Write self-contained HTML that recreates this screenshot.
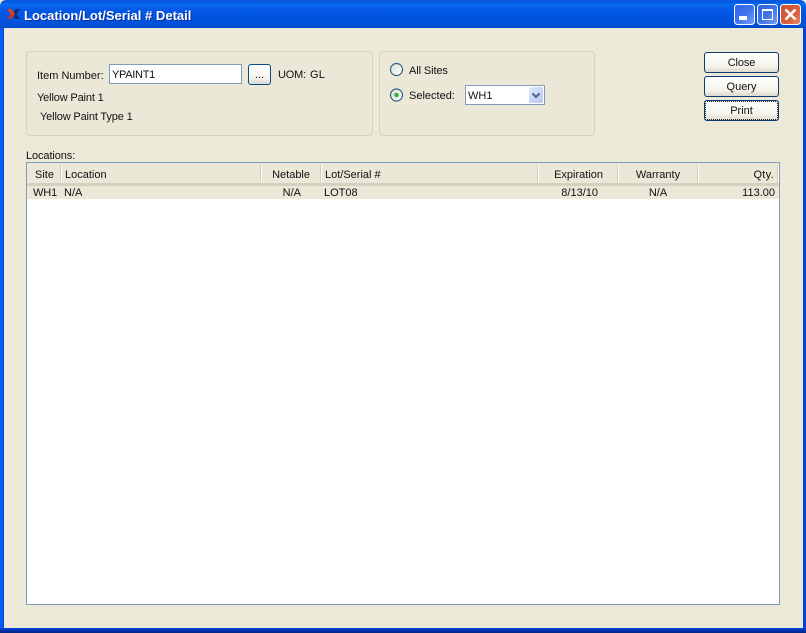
<!DOCTYPE html>
<html>
<head>
<meta charset="utf-8">
<style>
html,body{margin:0;padding:0;width:806px;height:633px;overflow:hidden;background:#ece9d8}
body{position:relative;font:11px/13px "Liberation Sans",sans-serif;color:#111}
.a{position:absolute;white-space:nowrap}
.t{position:absolute;white-space:nowrap;line-height:13px;margin-top:1px}
.r{text-align:right}
.c{text-align:center}
.group{position:absolute;border:1px solid #d6d3bf;border-radius:4px;background:#ebe8d8;box-sizing:border-box}
.btn{position:absolute;box-sizing:border-box;border:1px solid #0a3c6e;border-radius:3px;background:linear-gradient(#fff,#f4f3ec 70%,#dcd9cc);text-align:center}
.sep{position:absolute;top:165px;width:1px;height:17px;background:#cfccba;border-right:1px solid #fff}
</style>
</head>
<body>
<!-- title bar -->
<div class="a" style="left:0;top:0;width:806px;height:28px;background:linear-gradient(#0a5ad8 0,#0458e4 2px,#0a6af0 4px,#0358e6 10px,#0253de 20px,#0350d8 25px,#0349c8 28px);border-radius:6px 6px 0 0"></div>
<div class="a" style="left:0;top:28px;width:3px;height:601px;background:#0a5cf0"></div>
<div class="a" style="left:3px;top:28px;width:1px;height:601px;background:#0344d0"></div>
<div class="a" style="right:0;top:28px;width:3px;height:601px;background:#0342d4"></div>
<div class="a" style="left:0;top:628px;width:806px;height:5px;background:linear-gradient(#0342dc,#0336b8 40%,#02267e)"></div>

<svg class="a" style="left:7px;top:9px" width="13" height="10" viewBox="0 0 13 10">
<path d="M5 5L8.500 0H13L9.500 5 13 10H8.500z" fill="#102a78"/>
<path d="M0 0h4.500L8 5 4.500 10H0l3.500-5z" fill="#d8402c"/>
<path d="M0 10l3.500-5H6L4.500 10z" fill="#a83a50"/>
</svg>
<div class="a" style="left:24px;top:8px;font:bold 13px/15px 'Liberation Sans',sans-serif;color:#fff;letter-spacing:.02px;text-shadow:1px 1px 0 #0a2f9c">Location/Lot/Serial # Detail</div>

<!-- window buttons -->
<svg class="a" style="left:734px;top:4px" width="68" height="21" viewBox="0 0 68 21">
<defs>
<linearGradient id="b" x1="0" y1="0" x2="1" y2="1"><stop offset="0" stop-color="#2f62e0"/><stop offset=".5" stop-color="#3f74ee"/><stop offset="1" stop-color="#7c9cf0"/></linearGradient>
<linearGradient id="x" x1="0" y1="0" x2="1" y2="1"><stop offset="0" stop-color="#c9502e"/><stop offset=".6" stop-color="#dc5f3c"/><stop offset="1" stop-color="#e88a6c"/></linearGradient>
</defs>
<rect x=".5" y=".5" width="20" height="20" rx="3" fill="url(#b)" stroke="#fff"/>
<rect x="5" y="12" width="8" height="4" fill="#fff"/>
<rect x="23.500" y=".5" width="20" height="20" rx="3" fill="url(#b)" stroke="#fff"/>
<path d="M28.500 5.500h10v10h-10z" fill="none" stroke="#fff"/><rect x="28" y="5" width="11" height="2" fill="#fff"/>
<rect x="46.500" y=".5" width="20" height="20" rx="3" fill="url(#x)" stroke="#fff"/>
<path d="M51.500 5.500l10 10M61.500 5.500l-10 10" stroke="#fff" stroke-width="2.600" fill="none"/>
</svg>

<!-- group 1 -->
<div class="group" style="left:26px;top:51px;width:347px;height:85px"></div>
<div class="t" style="left:37px;top:69px">Item Number:</div>
<div class="a" style="left:109px;top:64px;width:133px;height:20px;box-sizing:border-box;border:1px solid #7f9db9;background:#fff"></div>
<div class="t" style="left:112px;top:68px;letter-spacing:-.3px">YPAINT1</div>
<div class="btn" style="left:248px;top:64px;width:23px;height:21px;line-height:21px;border-color:#0a4a80">...</div>
<div class="t" style="left:278px;top:68px;letter-spacing:-.2px">UOM:</div>
<div class="t" style="left:310px;top:68px;letter-spacing:.2px">GL</div>
<div class="t" style="left:37px;top:91px;letter-spacing:-.15px">Yellow Paint 1</div>
<div class="t" style="left:40px;top:110px;letter-spacing:-.15px">Yellow Paint Type 1</div>

<!-- group 2 -->
<div class="group" style="left:379px;top:51px;width:216px;height:85px"></div>
<svg class="a" style="left:389px;top:62px" width="15" height="40" viewBox="0 0 15 40">
<defs><linearGradient id="rd" x1="0" y1="0" x2="1" y2="1"><stop offset="0" stop-color="#dcdcd4"/><stop offset="1" stop-color="#fff"/></linearGradient></defs>
<circle cx="7.500" cy="7.500" r="6" fill="url(#rd)" stroke="#2f5f86" stroke-width="1.200"/>
<circle cx="7.500" cy="33" r="6" fill="url(#rd)" stroke="#2f5f86" stroke-width="1.200"/>
<circle cx="7.500" cy="33" r="2.300" fill="#33b53f"/>
</svg>
<div class="t" style="left:409px;top:64px;letter-spacing:-.1px">All Sites</div>
<div class="t" style="left:409px;top:89px">Selected:</div>
<div class="a" style="left:465px;top:85px;width:80px;height:20px;box-sizing:border-box;border:1px solid #7f9db9;background:#fff"></div>
<div class="t" style="left:468px;top:89px">WH1</div>
<div class="a" style="left:529px;top:87px;width:14px;height:16px;background:linear-gradient(135deg,#dfe8fb,#b4c6f2);border-radius:1px"></div>
<svg class="a" style="left:529px;top:87px" width="14" height="16" viewBox="0 0 14 16"><path d="M3.500 6.500L7 10l3.500-3.500" fill="none" stroke="#4d6185" stroke-width="2"/></svg>

<!-- buttons -->
<div class="btn" style="left:704px;top:52px;width:75px;height:21px;line-height:21px;letter-spacing:-.1px">Close</div>
<div class="btn" style="left:704px;top:76px;width:75px;height:21px;line-height:21px">Query</div>
<div class="btn" style="left:704px;top:100px;width:75px;height:21px;line-height:21px">Print</div>
<div class="a" style="left:705px;top:101px;width:73px;height:19px;box-sizing:border-box;border:1px dotted #222"></div>

<!-- table -->
<div class="t" style="left:26px;top:149px;letter-spacing:-.1px">Locations:</div>
<div class="a" style="left:26px;top:162px;width:754px;height:443px;box-sizing:border-box;border:1px solid #7f9db9;background:#fff"></div>
<div class="a" style="left:27px;top:163px;width:752px;height:20px;background:#ebe8d8"></div>
<div class="a" style="left:27px;top:183px;width:752px;height:3px;background:#d5d1bf"></div>
<div class="a" style="left:27px;top:186px;width:752px;height:13px;background:#ebe8d8"></div>
<div class="sep" style="left:60px"></div>
<div class="sep" style="left:260px"></div>
<div class="sep" style="left:320px"></div>
<div class="sep" style="left:537px"></div>
<div class="sep" style="left:617px"></div>
<div class="sep" style="left:697px"></div>
<div class="sep" style="left:777px"></div>

<div class="t" style="left:35px;top:168px">Site</div>
<div class="t" style="left:65px;top:168px">Location</div>
<div class="t r" style="left:262px;width:48px;top:168px">Netable</div>
<div class="t" style="left:325px;top:168px">Lot/Serial #</div>
<div class="t r" style="left:540px;width:63px;top:168px">Expiration</div>
<div class="t c" style="left:619px;width:78px;top:168px">Warranty</div>
<div class="t r" style="left:700px;width:74px;top:168px;letter-spacing:.3px">Qty.</div>

<div class="t" style="left:33px;top:186px;letter-spacing:-.1px">WH1</div>
<div class="t" style="left:64px;top:186px">N/A</div>
<div class="t r" style="left:262px;width:39px;top:186px">N/A</div>
<div class="t" style="left:324px;top:186px">LOT08</div>
<div class="t r" style="left:540px;width:58px;top:186px">8/13/10</div>
<div class="t c" style="left:619px;width:78px;top:186px">N/A</div>
<div class="t r" style="left:700px;width:75px;top:186px">113.00</div>
</body>
</html>
